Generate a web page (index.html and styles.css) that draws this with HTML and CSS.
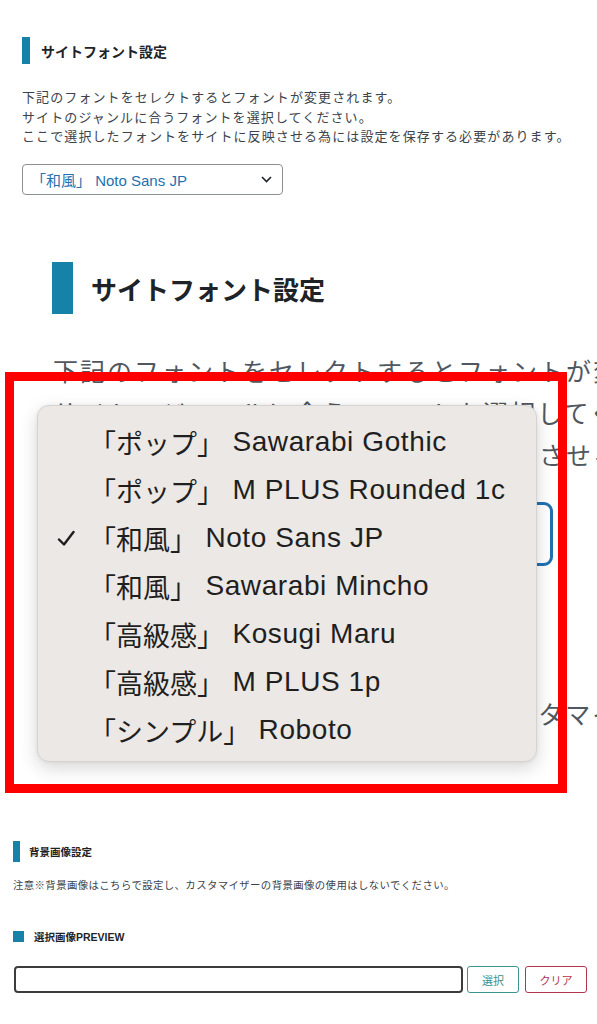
FILE: index.html
```html
<!DOCTYPE html>
<html lang="ja">
<head>
<meta charset="utf-8">
<title>サイトフォント設定</title>
<link rel="stylesheet" href="styles.css">
</head>
<body>
<section class="top">
  <div class="h-small"><i class="bar"></i><span>サイトフォント設定</span></div>
  <p class="desc-small">下記のフォントをセレクトするとフォントが変更されます。<br>サイトのジャンルに合うフォントを選択してください。<br>ここで選択したフォントをサイトに反映させる為には設定を保存する必要があります。</p>
  <div class="sel-small"><span>「和風」 Noto Sans JP</span><svg width="11" height="7" viewBox="0 0 11 7"><path d="M1 1l4.5 4.5L10 1" fill="none" stroke="#1d2327" stroke-width="1.6"/></svg></div>
</section>

<section class="zoom">
  <div class="h-big"><i class="bar"></i><span>サイトフォント設定</span></div>
  <p class="desc-big">下記のフォントをセレクトするとフォントが変更されます。<br>サイトのジャンルに合うフォントを選択してください。<br>ここで選択したフォントをサイトに反映させる為には設定を保存する必要があります。</p>
  <div class="sel-big"></div>
  <p class="desc-big note-big">注意※背景画像はこちらで設定し、カスタマイザーの背景画像の使用はしないでください。</p>

  <div class="red-frame"></div>
  <ul class="menu">
    <li><span class="chk"></span><span class="jp">「ポップ」</span> Sawarabi Gothic</li>
    <li><span class="chk"></span><span class="jp">「ポップ」</span> M PLUS Rounded 1c</li>
    <li><span class="chk"><svg width="18" height="16" viewBox="0 0 18 16"><path d="M2 9.5l5 5L16.5 2" fill="none" stroke="#1e1e1e" stroke-width="2.4" stroke-linecap="round" stroke-linejoin="round"/></svg></span><span class="jp">「和風」</span> Noto Sans JP</li>
    <li><span class="chk"></span><span class="jp">「和風」</span> Sawarabi Mincho</li>
    <li><span class="chk"></span><span class="jp">「高級感」</span> Kosugi Maru</li>
    <li><span class="chk"></span><span class="jp">「高級感」</span> M PLUS 1p</li>
    <li><span class="chk"></span><span class="jp">「シンプル」</span> Roboto</li>
  </ul>
</section>

<section class="bottom">
  <div class="h-tiny"><i class="bar"></i><span>背景画像設定</span></div>
  <p class="note-small">注意※背景画像はこちらで設定し、カスタマイザーの背景画像の使用はしないでください。</p>
  <div class="h-sq"><i class="sq"></i><span>選択画像PREVIEW</span></div>
  <div class="img-row">
    <div class="img-input"></div>
    <button class="btn btn-select">選択</button>
    <button class="btn btn-clear">クリア</button>
  </div>
</section>
</body>
</html>
```

FILE: styles.css
```css
html, body {
  margin: 0;
  padding: 0;
  background: #fff;
}
body {
  width: 597px;
  height: 1024px;
  overflow: hidden;
  font-family: "Liberation Sans", "Noto Sans CJK JP", sans-serif;
  color: #1d2327;
}
p { margin: 0; }

/* ---------- top (actual size) ---------- */
.top {
  height: 215px;
  box-sizing: border-box;
  padding: 37px 0 0 22px;
}
.h-small {
  display: flex;
  align-items: center;
  gap: 11px;
  height: 27px;
}
.bar {
  display: block;
  align-self: stretch;
  background: #1682a8;
}
.h-small .bar { width: 8px; }
.h-small span {
  font-size: 14px;
  font-weight: 700;
  color: #1d2327;
}
.desc-small {
  margin-top: 24px;
  font-size: 13px;
  letter-spacing: 1.1px;
  line-height: 19.5px;
  color: #3c434a;
  white-space: nowrap;
}
.sel-small {
  margin-top: 17px;
  width: 261px;
  height: 31px;
  box-sizing: border-box;
  border: 1px solid #8c8f94;
  border-radius: 4px;
  display: flex;
  align-items: center;
  justify-content: space-between;
  padding: 0 10px 0 8px;
  color: #2271b1;
  font-size: 15px;
}

/* ---------- zoomed section ---------- */
.zoom {
  position: relative;
  height: 600px;
  box-sizing: border-box;
  padding: 47px 0 0 52px;
  overflow: hidden;
}
.h-big {
  display: flex;
  align-items: center;
  gap: 18px;
  height: 52px;
}
.h-big .bar { width: 21px; }
.h-big span {
  font-size: 26px;
  font-weight: 700;
  color: #1d2327;
}
.desc-big {
  margin-top: 37px;
  margin-left: 1px;
  font-size: 25px;
  letter-spacing: 2px;
  line-height: 42px;
  color: #50575e;
  white-space: nowrap;
}
.sel-big {
  margin-top: 25px;
  margin-left: 1px;
  width: 500px;
  height: 64px;
  box-sizing: border-box;
  border: 3.5px solid #2271b1;
  border-radius: 9px;
}
.note-big { margin-top: 128px; }

.red-frame {
  position: absolute;
  left: 5px;
  top: 157px;
  width: 562px;
  height: 421px;
  box-sizing: border-box;
  border: 9px solid #f00;
}
.menu {
  position: absolute;
  left: 37px;
  top: 190px;
  width: 500px;
  height: 357px;
  box-sizing: border-box;
  margin: 0;
  padding: 12px 0 0;
  list-style: none;
  background: #ebe8e5;
  border: 1px solid #d6d3d0;
  border-radius: 12px;
  box-shadow: 0 6px 18px rgba(0, 0, 0, 0.16), 0 0 4px rgba(0, 0, 0, 0.06);
}
.menu li {
  display: flex;
  align-items: center;
  height: 48px;
  font-size: 28px;
  letter-spacing: 0.6px;
  color: #1f1f1f;
  white-space: pre;
}
.menu .jp {
  font-size: 27px;
  letter-spacing: 0;
}
.chk {
  display: flex;
  align-items: center;
  width: 51px;
  padding-left: 19px;
  box-sizing: border-box;
  flex: none;
}

/* ---------- bottom (actual size) ---------- */
.bottom {
  padding: 26px 0 0 13px;
}
.h-tiny {
  display: flex;
  align-items: center;
  gap: 9px;
  height: 21px;
}
.h-tiny .bar { width: 7px; }
.h-tiny span {
  font-size: 10.5px;
  font-weight: 700;
  color: #1d2327;
}
.note-small {
  margin-top: 16px;
  font-size: 10.4px;
  letter-spacing: 0.4px;
  line-height: 16px;
  color: #3c434a;
  white-space: nowrap;
}
.h-sq {
  margin-top: 37px;
  display: flex;
  align-items: center;
  gap: 10px;
  height: 11px;
}
.sq {
  display: block;
  width: 11px;
  height: 11px;
  background: #1682a8;
}
.h-sq span {
  font-size: 10.5px;
  font-weight: 700;
  color: #1d2327;
}
.img-row {
  margin-top: 24px;
  display: flex;
  align-items: stretch;
  height: 27px;
}
.img-input {
  width: 449px;
  margin-left: 1px;
  box-sizing: border-box;
  border: 2px solid #3c3c3c;
  border-radius: 4px;
}
.btn {
  font-family: "Liberation Sans", "Noto Sans CJK JP", sans-serif;
  font-size: 11px;
  background: #fff;
  border-radius: 3px;
  padding: 0;
  box-sizing: border-box;
}
.btn-select {
  margin-left: 4px;
  width: 52px;
  border: 1.5px solid #3a9491;
  color: #3a8f8c;
}
.btn-clear {
  margin-left: 6px;
  width: 62px;
  border: 1.5px solid #b3344f;
  color: #b3344f;
}
```
